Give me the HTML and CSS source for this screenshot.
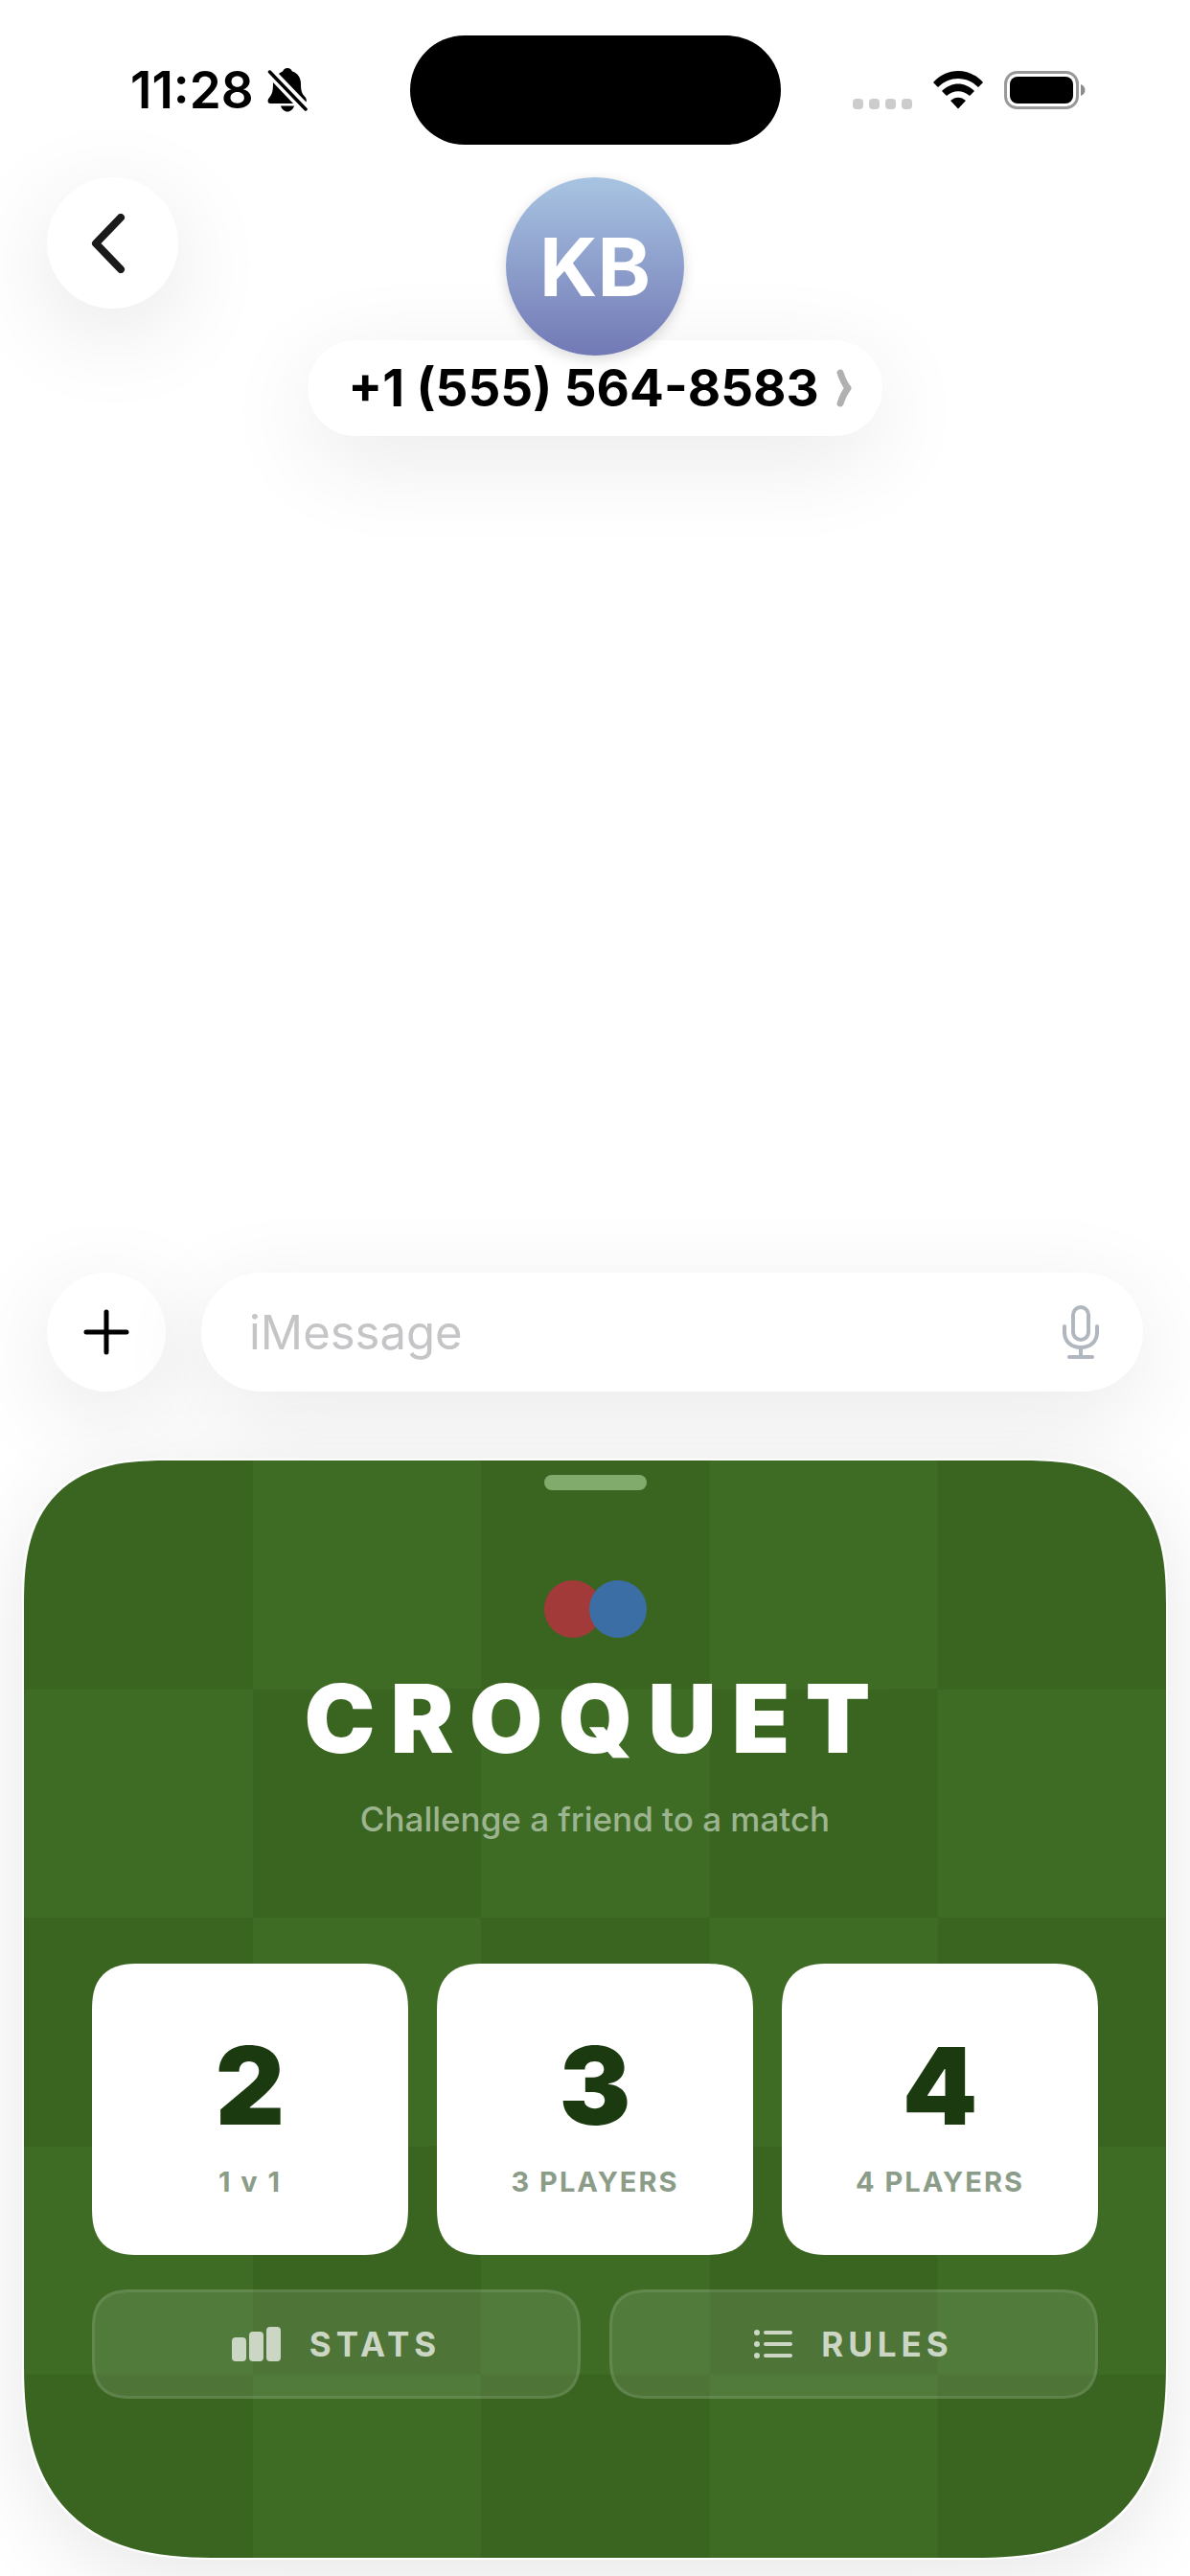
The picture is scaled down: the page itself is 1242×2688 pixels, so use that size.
FILE: index.html
```html
<!DOCTYPE html>
<html lang="en">
<head>
  <meta charset="UTF-8">
  <meta name="viewport" content="width=device-width, initial-scale=1.0">
  <title>Croquet</title>
  <link rel="stylesheet" href="styles.css">
</head>
<body>
  <div class="status-bar">
    <div class="status-left">
      <span class="time">11:28</span>
      <svg class="bell" viewBox="0 0 42 46" aria-hidden="true">
        <path d="M12 6C13 5 15 4 16 3.500C17 1 19 0 21 0C23 0 25 1 26 3.500C32 5.500 35 10 35 17C35 26 37 27 40 31C41 33 41 34 40.500 35.500Z"/>
        <path d="M6 15L27 37H3C0 37 0 33 2 31C5 27 6 25 6 15Z"/>
        <path d="M14 39.500H28C27 43 24 45.500 21 45.500C18 45.500 15 43 14 39.500Z"/>
        <path d="M2 3.500L40 43" stroke="#fff" stroke-width="8"/>
        <path d="M2.500 4L40 43" stroke="#000" stroke-width="3.500" stroke-linecap="round"/>
      </svg>
    </div>
    <div class="island"></div>
    <div class="status-right">
      <div class="signal"><i></i><i></i><i></i><i></i></div>
      <svg class="wifi" viewBox="0 0 52 40" aria-hidden="true">
        <path d="M0 12C14 -4 38 -4 52 12L47 17C35 5 17 5 5 17Z"/>
        <path d="M9 21C19 11 33 11 43 21L38 26C31 19.500 21 19.500 14 26Z"/>
        <path d="M18 31C23 26.500 29 26.500 34 31L26 39.500Z"/>
      </svg>
      <svg class="battery" viewBox="0 0 86 40" aria-hidden="true">
        <rect x="1.500" y="1.500" width="75" height="37" rx="12" fill="none" stroke="#999" stroke-width="3"/>
        <rect x="6" y="6" width="66" height="28" rx="8"/>
        <path d="M80 14C86 16 86 24 80 26Z" fill="#8c8c8c"/>
      </svg>
    </div>
  </div>

  <header class="chat-header">
    <button class="round-btn back" aria-label="Back">
      <svg width="36" height="62" viewBox="0 0 36 62" aria-hidden="true"><path d="M31 4L5 31L31 58" stroke-width="8"/></svg>
    </button>
    <div class="contact">
      <div class="avatar">KB</div>
      <button class="contact-name">
        +1 (555) 564-8583
        <svg width="16" height="40" viewBox="0 0 16 40" aria-hidden="true"><path d="M4 4C6 10 8 15 12 20C8 25 6 30 4 36" stroke-width="7"/></svg>
      </button>
    </div>
  </header>

  <main class="messages"></main>

  <form class="composer">
    <button class="round-btn plus" type="button" aria-label="Add">
      <svg width="48" height="48" viewBox="0 0 48 48" aria-hidden="true"><path d="M24 3V45M3 24H45" stroke-width="5"/></svg>
    </button>
    <div class="message-box">
      <input class="message-input" type="text" placeholder="iMessage" aria-label="iMessage">
      <button class="mic" type="button" aria-label="Dictate">
        <svg width="38" height="56" viewBox="0 0 38 56" aria-hidden="true">
          <rect x="11" y="2" width="16" height="34" rx="8"/>
          <path d="M2 22V28C2 38 9 44 19 44C29 44 36 38 36 28V22M19 44V54M7 54H31"/>
        </svg>
      </button>
    </div>
  </form>

  <section class="game">
    <div class="handle"></div>
    <div class="balls"><span class="ball red"></span><span class="ball blue"></span></div>
    <h1>CROQUET</h1>
    <p class="tagline">Challenge a friend to a match</p>
    <div class="modes">
      <button class="mode"><span class="count">2</span><span class="label">1 v 1</span></button>
      <button class="mode"><span class="count">3</span><span class="label">3 PLAYERS</span></button>
      <button class="mode"><span class="count">4</span><span class="label">4 PLAYERS</span></button>
    </div>
    <div class="links">
      <button class="link-btn">
        <svg width="51" height="36" viewBox="0 0 51 36" aria-hidden="true">
          <rect x="0" y="11" width="15" height="25" rx="4"/>
          <rect x="18" y="5" width="15" height="31" rx="4"/>
          <rect x="36" y="0" width="15" height="36" rx="4"/>
        </svg>
        STATS
      </button>
      <button class="link-btn">
        <svg width="40" height="30" viewBox="0 0 40 30" aria-hidden="true">
          <circle cx="3" cy="3" r="3"/><circle cx="3" cy="15" r="3"/><circle cx="3" cy="27" r="3"/>
          <rect x="10" y="1" width="30" height="4" rx="2"/>
          <rect x="10" y="13" width="30" height="4" rx="2"/>
          <rect x="10" y="25" width="30" height="4" rx="2"/>
        </svg>
        RULES
      </button>
    </div>
  </section>
</body>
</html>
```
FILE: styles.css
```css
* {
  box-sizing: border-box;
}
body {
  margin: 0;
  min-height: 100vh;
  display: flex;
  flex-direction: column;
  background: #fff;
  color: #000;
  font-family: Inter, "Liberation Sans", sans-serif;
  overflow-x: hidden;
}
button {
  border: none;
  padding: 0;
  font-family: inherit;
  color: inherit;
  background: #fff;
  cursor: pointer;
}
svg {
  display: block;
  flex: none;
}

/* status bar */
.status-bar {
  display: grid;
  grid-template-columns: 1fr 387px 1fr;
  align-items: center;
  padding-top: 37px;
}
.status-left {
  display: flex;
  align-items: center;
  gap: 14px;
  padding-left: 136px;
}
.time {
  font-size: 53px;
  line-height: 60px;
  font-weight: 600;
}
.bell {
  width: 42px;
  height: 46px;
}
.island {
  height: 114px;
  border-radius: 57px;
  background: #000;
}
.status-right {
  display: flex;
  align-items: center;
  justify-content: flex-end;
  gap: 22px;
  padding-right: 108px;
}
.signal {
  display: flex;
  gap: 6px;
  align-self: flex-end;
}
.signal i {
  width: 11px;
  height: 11px;
  border-radius: 4px;
  background: #ccc;
}
.wifi {
  width: 52px;
  height: 40px;
}
.battery {
  width: 86px;
  height: 40px;
}

/* header */
.chat-header {
  display: grid;
  grid-template-columns: 1fr auto 1fr;
  align-items: start;
  padding: 34px 49px 0;
}
.round-btn {
  display: flex;
  align-items: center;
  justify-content: center;
  border-radius: 50%;
  box-shadow: 0 24px 100px rgba(0, 0, 0, 0.1);
}
.round-btn path,
.contact-name path {
  fill: none;
  stroke: #000;
  stroke-linecap: round;
  stroke-linejoin: round;
}
.back {
  width: 137px;
  height: 137px;
  padding-right: 10px;
}
.back path {
  stroke: #1a1a1a;
}
.contact {
  display: flex;
  flex-direction: column;
  align-items: center;
}
.avatar {
  position: relative;
  z-index: 1;
  width: 186px;
  height: 186px;
  margin-bottom: -16px;
  border-radius: 50%;
  background: linear-gradient(#a8c4e2, #7279b5);
  box-shadow: 0 4px 14px rgba(0, 0, 0, 0.15);
  color: #fff;
  font-size: 84px;
  font-weight: 700;
  line-height: 188px;
  text-align: center;
}
.contact-name {
  display: flex;
  align-items: center;
  gap: 18px;
  height: 100px;
  padding: 0 32px 0 42px;
  border-radius: 50px;
  box-shadow: 0 24px 100px rgba(0, 0, 0, 0.09);
  font-size: 53px;
  font-weight: 700;
}
.contact-name path {
  stroke: #b0b0b0;
}

.messages {
  flex: 1;
}

/* composer */
.composer {
  display: flex;
  gap: 37px;
  padding: 0 49px 72px;
}
.plus {
  flex: none;
  width: 124px;
  height: 124px;
}
.message-box {
  flex: 1;
  display: flex;
  align-items: center;
  height: 124px;
  padding: 0 46px 0 50px;
  border-radius: 62px;
  background: #fff;
  box-shadow: 0 24px 100px rgba(0, 0, 0, 0.09);
}
.message-input {
  flex: 1;
  min-width: 0;
  padding: 0;
  border: none;
  outline: none;
  background: none;
  font-family: inherit;
  font-size: 49px;
}
.message-input::placeholder {
  color: #c5c5c7;
}
.mic svg {
  fill: none;
  stroke: #b0b7bf;
  stroke-width: 4;
  stroke-linecap: round;
}

/* game panel */
.game {
  display: flex;
  flex-direction: column;
  align-items: center;
  margin: 0 25px 19px;
  padding: 15px 71px 166px;
  border-radius: 150px 150px 205px 205px;
  corner-shape: superellipse(1.4);
  background: conic-gradient(#3e6c25 25%, #3a6521 0 50%, #3e6c25 0 75%, #3a6521 0);
  background-size: calc((100vw - 50px) * 0.4) calc((100vw - 50px) * 0.4);
  box-shadow: 0 0 0 2px #fff, 0 20px 90px rgba(0, 0, 0, 0.1);
}
.handle {
  width: 107px;
  height: 16px;
  border-radius: 8px;
  background: #80ab6c;
}
.balls {
  display: flex;
  margin-top: 94px;
}
.ball {
  width: 60px;
  height: 60px;
  border-radius: 50%;
}
.red {
  background: #a33a3a;
}
.blue {
  margin-left: -13px;
  background: #3b6ea5;
}
h1 {
  margin: 34px 0 0;
  color: #fff;
  font-size: 99px;
  line-height: 100px;
  font-weight: 900;
  letter-spacing: 16px;
}
.tagline {
  margin: 34px 0 0;
  color: #9cb490;
  font-size: 35px;
  line-height: 42px;
  font-weight: 500;
}
.modes,
.links {
  display: grid;
  gap: 30px;
  width: 100%;
}
.modes {
  grid-template-columns: repeat(3, 1fr);
  margin-top: 130px;
}
.links {
  grid-template-columns: repeat(2, 1fr);
  margin-top: 36px;
}
.mode {
  display: flex;
  flex-direction: column;
  align-items: center;
  padding: 62px 0 58px;
  gap: 18px;
  border-radius: 50px;
  corner-shape: superellipse(1.4);
}
.count {
  color: #1b3a10;
  font-size: 112px;
  line-height: 130px;
  font-weight: 900;
}
.label {
  color: #8b9d88;
  font-size: 29px;
  line-height: 36px;
  font-weight: 700;
  letter-spacing: 2px;
}
.link-btn {
  display: flex;
  align-items: center;
  justify-content: center;
  gap: 30px;
  height: 114px;
  border: 3px solid rgba(255, 255, 255, 0.1);
  border-radius: 42px;
  corner-shape: superellipse(1.4);
  background: rgba(255, 255, 255, 0.1);
  color: #cbd6c5;
  font-size: 35px;
  font-weight: 700;
  letter-spacing: 5px;
}
.link-btn svg {
  fill: #cbd6c5;
}
```
